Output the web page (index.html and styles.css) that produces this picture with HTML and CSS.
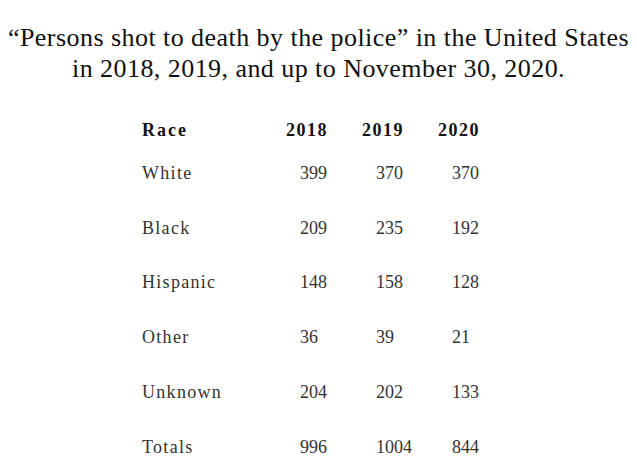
FILE: index.html
```html
<!DOCTYPE html>
<html lang="en">
<head>
<meta charset="utf-8">
<title>Persons shot to death by the police</title>
<link rel="stylesheet" href="styles.css">
</head>
<body>
<h1 class="title">“Persons shot to death by the police” in the United States<br>in 2018, 2019, and up to November 30, 2020.</h1>
<div class="table">
  <div class="row head">
    <span class="label">Race</span><span class="num">2018</span><span class="num">2019</span><span class="num">2020</span>
  </div>
  <div class="row">
    <span class="label">White</span><span class="num">399</span><span class="num">370</span><span class="num">370</span>
  </div>
  <div class="row">
    <span class="label">Black</span><span class="num">209</span><span class="num">235</span><span class="num">192</span>
  </div>
  <div class="row">
    <span class="label">Hispanic</span><span class="num">148</span><span class="num">158</span><span class="num">128</span>
  </div>
  <div class="row">
    <span class="label">Other</span><span class="num">36</span><span class="num">39</span><span class="num">21</span>
  </div>
  <div class="row">
    <span class="label">Unknown</span><span class="num">204</span><span class="num">202</span><span class="num">133</span>
  </div>
  <div class="row">
    <span class="label">Totals</span><span class="num">996</span><span class="num">1004</span><span class="num">844</span>
  </div>
</div>
</body>
</html>
```

FILE: styles.css
```css
html, body {
  margin: 0;
  padding: 0;
  background: #ffffff;
}

.title {
  margin: 0;
  padding-top: 22px;
  font-family: "Liberation Serif", "Times New Roman", serif;
  font-weight: normal;
  font-size: 26px;
  line-height: 31px;
  letter-spacing: 0.45px;
  color: #111;
  text-align: center;
}

.table {
  margin-top: 30px;
  margin-left: 141px;
  font-family: "Liberation Serif", "Times New Roman", serif;
  color: #333;
  font-size: 18px;
}

.row {
  display: grid;
  grid-template-columns: 145px 76px 76px 76px;
  height: 54.8px;
  align-items: center;
}

.label {
  padding-left: 1px;
  letter-spacing: 1.3px;
}

.row.head {
  height: 32px;
  color: #111;
  font-weight: bold;
  letter-spacing: 1.5px;
}

.row.head .label {
  letter-spacing: 2px;
}

.num {
  padding-left: 14px;
}

.row.head .num {
  padding-left: 0;
}
```
